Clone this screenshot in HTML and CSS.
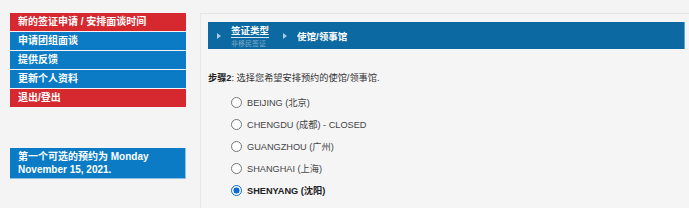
FILE: index.html
```html
<!DOCTYPE html>
<html lang="zh">
<head>
<meta charset="utf-8">
<link rel="stylesheet" href="styles.css">
</head>
<body>
<div class="page">
  <aside class="sidebar">
    <ul class="menu">
      <li class="item red">新的签证申请 / 安排面谈时间</li>
      <li class="item blue">申请团组面谈</li>
      <li class="item blue">提供反馈</li>
      <li class="item blue">更新个人资料</li>
      <li class="item red">退出/登出</li>
    </ul>
    <div class="notice">第一个可选的预约为 Monday November 15, 2021.</div>
  </aside>
  <main class="panel">
    <div class="steps">
      <span class="tri"></span>
      <div class="step done">
        <span class="step-title">签证类型</span>
        <span class="step-sub">非移民签证</span>
      </div>
      <span class="tri"></span>
      <div class="step current">使馆/领事馆</div>
    </div>
    <p class="prompt"><b>步骤2</b>: 选择您希望安排预约的使馆/领事馆.</p>
    <ul class="options">
      <li class="opt"><span class="radio"></span>BEIJING (北京)</li>
      <li class="opt"><span class="radio"></span>CHENGDU (成都) - CLOSED</li>
      <li class="opt"><span class="radio"></span>GUANGZHOU (广州)</li>
      <li class="opt"><span class="radio"></span>SHANGHAI (上海)</li>
      <li class="opt selected"><span class="radio checked"></span>SHENYANG (沈阳)</li>
    </ul>
  </main>
</div>
</body>
</html>
```
FILE: styles.css
```css
html, body {
  margin: 0;
  padding: 0;
  background: #f4f4f5;
  font-family: "Liberation Sans", "Noto Sans CJK SC", sans-serif;
  overflow: hidden;
}
.page {
  display: flex;
  gap: 14px;
  padding: 13px 0 0 10px;
  height: 208px;
  box-sizing: border-box;
}
.sidebar {
  width: 176px;
  flex: none;
}
.menu {
  list-style: none;
  margin: 0;
  padding: 0;
  display: flex;
  flex-direction: column;
  gap: 1px;
}
.item {
  height: 18px;
  line-height: 18px;
  padding-left: 8px;
  color: #fff;
  font-weight: bold;
  font-size: 10px;
}
.red { background: #d6282f; }
.blue { background: #0a7bc4; }
.notice {
  margin-top: 41px;
  background: #0a7bc4;
  color: #fff;
  font-weight: bold;
  font-size: 10px;
  line-height: 12.5px;
  padding: 3px 8px 3px 8px;
  height: 24px;
  border: 1px solid #8fc0e0;
  border-width: 0 1px 1px 0;
}
.panel {
  flex: 1;
  border-top: 1px solid #e4e4e4;
  border-left: 1px solid #e8e8e8;
  padding: 8px 4px 0 7px;
  background: #f5f5f6;
}
.steps {
  height: 27px;
  background: #0c69a1;
  border-right: 1px solid #5fa3d1;
  display: flex;
  align-items: center;
  padding-left: 9px;
  box-sizing: border-box;
}
.tri {
  width: 0;
  height: 0;
  border-top: 3px solid transparent;
  border-bottom: 3px solid transparent;
  border-left: 4px solid #a9cbe3;
  flex: none;
}
.step {
  color: #fff;
  font-weight: bold;
  font-size: 9.5px;
}
.done {
  display: flex;
  flex-direction: column;
  margin: 0 14px 0 10px;
  padding-top: 2px;
}
.step-title {
  line-height: 12px;
  border-bottom: 1px solid #d8e6f0;
}
.step-sub {
  color: #7fa9c8;
  font-weight: normal;
  font-size: 7px;
  line-height: 11px;
}
.current {
  margin-left: 10px;
  font-size: 9.5px;
}
.prompt {
  margin: 22px 0 0 0;
  font-size: 9.2px;
  line-height: 14px;
  color: #333;
}
.prompt b { color: #222; }
.options {
  list-style: none;
  margin: 6px 0 0 0;
  padding: 0 0 0 23px;
}
.opt {
  display: flex;
  align-items: center;
  height: 22px;
  font-size: 9.2px;
  color: #444;
}
.selected {
  font-weight: bold;
  color: #222;
}
.radio {
  width: 11px;
  height: 11px;
  border: 1px solid #767676;
  border-radius: 50%;
  background: #fff;
  margin-right: 5px;
  flex: none;
  box-sizing: border-box;
}
.radio.checked {
  border: 1px solid #0a6ad6;
  background: radial-gradient(circle, #0a6ad6 0 2.8px, #fff 3.3px);
}
```
